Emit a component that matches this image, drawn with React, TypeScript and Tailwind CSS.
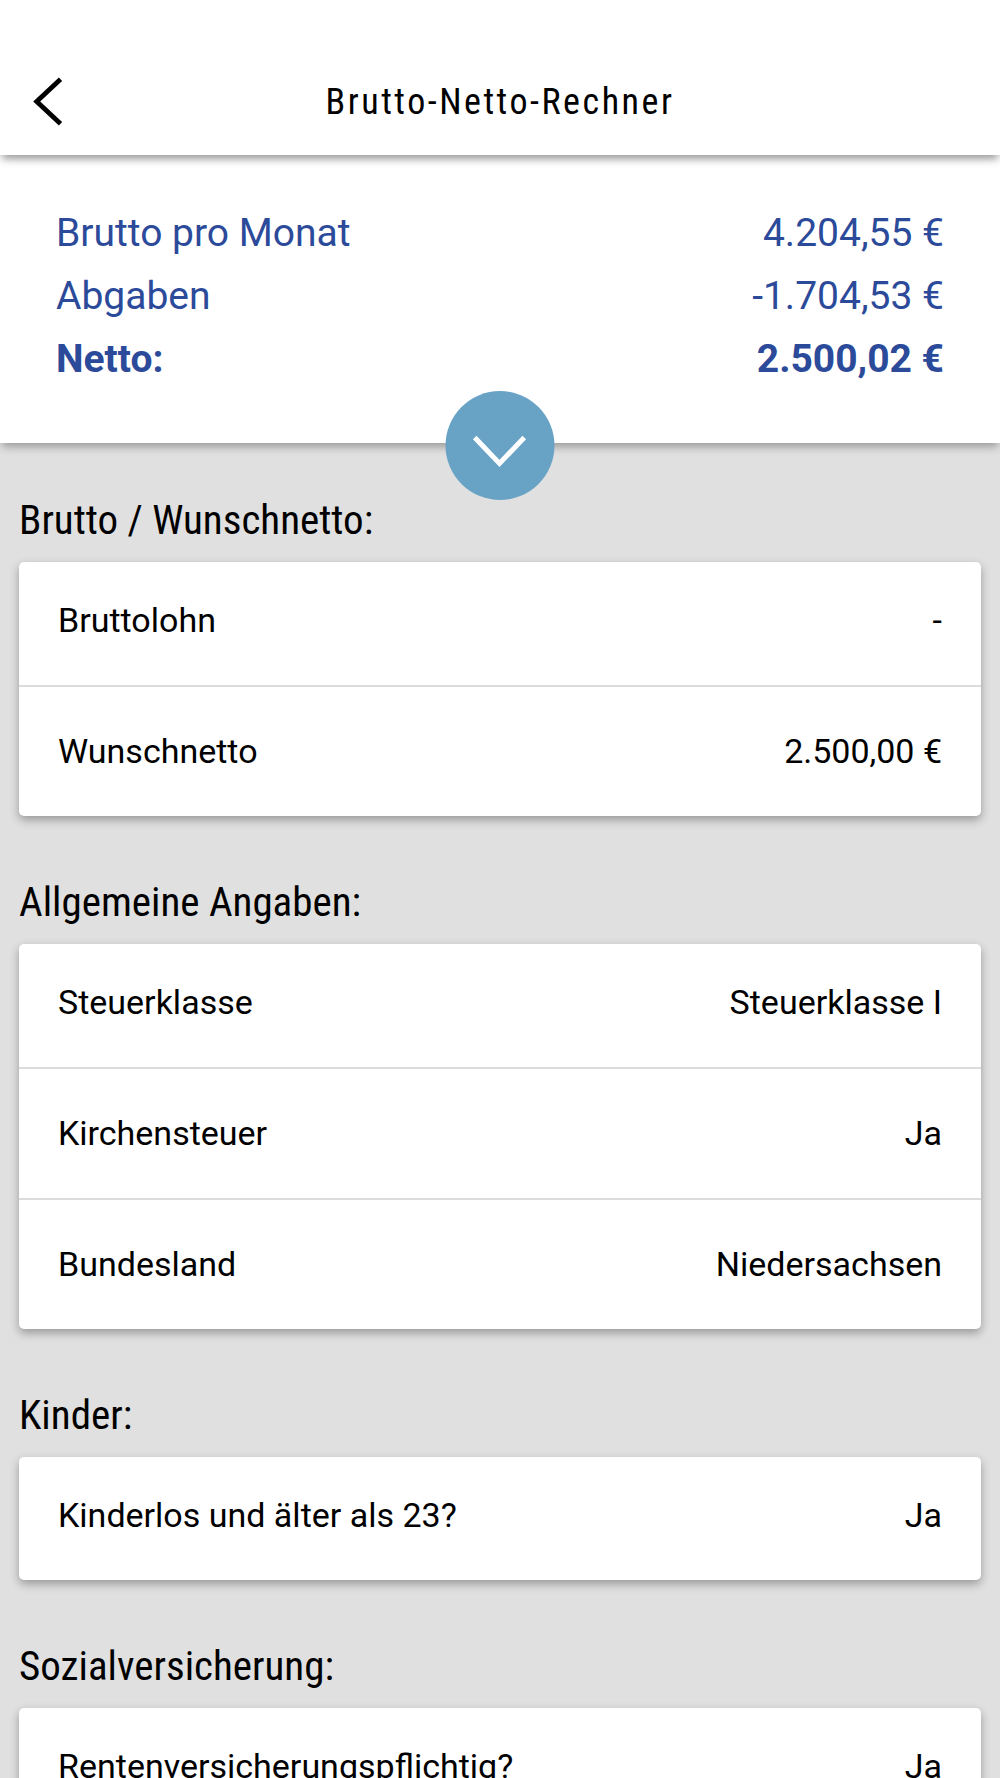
import { ChangeEvent, useState } from "react";

type Field = {
  id: string;
  label: string;
  value: string;
  options?: string[];
};

type Section = {
  title: string;
  fields: Field[];
};

const yesNo = ["Ja", "Nein"];

const results = [
  { label: "Brutto pro Monat", value: "4.204,55 €", total: false },
  { label: "Abgaben", value: "-1.704,53 €", total: false },
  { label: "Netto:", value: "2.500,02 €", total: true },
];

const sections: Section[] = [
  {
    title: "Brutto / Wunschnetto:",
    fields: [
      { id: "bruttolohn", label: "Bruttolohn", value: "-" },
      { id: "wunschnetto", label: "Wunschnetto", value: "2.500,00 €" },
    ],
  },
  {
    title: "Allgemeine Angaben:",
    fields: [
      { id: "steuerklasse", label: "Steuerklasse", value: "Steuerklasse I", options: ["Steuerklasse I", "Steuerklasse II", "Steuerklasse III"] },
      { id: "kirchensteuer", label: "Kirchensteuer", value: "Ja", options: yesNo },
      { id: "bundesland", label: "Bundesland", value: "Niedersachsen", options: ["Niedersachsen", "Bayern", "Berlin"] },
    ],
  },
  {
    title: "Kinder:",
    fields: [{ id: "kinderlos", label: "Kinderlos und älter als 23?", value: "Ja", options: yesNo }],
  },
  {
    title: "Sozialversicherung:",
    fields: [{ id: "rente", label: "Rentenversicherungspflichtig?", value: "Ja", options: yesNo }],
  },
];

function FieldRow({ field }: { field: Field }) {
  const [value, setValue] = useState(field.value);
  const onChange = (e: ChangeEvent<HTMLInputElement | HTMLSelectElement>) => setValue(e.target.value);

  return (
    <div className="flex items-center justify-between gap-4 px-[39px] pt-11 pb-[45px] first:pt-[38px]">
      <label htmlFor={field.id} className="whitespace-nowrap">
        {field.label}
      </label>
      {field.options ? (
        <select
          id={field.id}
          value={value}
          onChange={onChange}
          className="h-10 min-w-0 flex-1 appearance-none bg-transparent text-right [text-align-last:right] outline-none"
        >
          {field.options.map((o) => (
            <option key={o}>{o}</option>
          ))}
        </select>
      ) : (
        <input
          id={field.id}
          value={value}
          onChange={onChange}
          className="h-10 min-w-0 flex-1 bg-transparent text-right outline-none"
        />
      )}
    </div>
  );
}

export default function App() {
  return (
    <div className="h-screen overflow-hidden bg-[#e0e0e0] font-['Roboto',sans-serif] text-black">
      <header className="relative z-20 grid grid-cols-[1fr_auto_1fr] items-center bg-white px-8 pt-12 shadow-[0_6px_8px_-2px_rgba(0,0,0,0.4)]">
        <button type="button" aria-label="Zurück" className="flex h-[107px] w-10 items-center">
          <svg viewBox="0 0 32 50" className="h-[50px] w-8" fill="none" stroke="currentColor" strokeWidth="4.8">
            <path d="M28.5 2.2 4.7 24.4l23.8 22.3" />
          </svg>
        </button>
        <h1 className="font-['Roboto_Condensed','Roboto',sans-serif] text-4xl tracking-[0.07em]">Brutto-Netto-Rechner</h1>
      </header>

      <section className="relative z-10 bg-white px-14 pt-[47px] pb-[52px] text-[39px] leading-[63px] text-[#2c4a9a] shadow-[0_6px_8px_-2px_rgba(0,0,0,0.3)]">
        <dl>
          {results.map((r) => (
            <div key={r.label} className={r.total ? "flex justify-between font-bold" : "flex justify-between"}>
              <dt>{r.label}</dt>
              <dd>{r.value}</dd>
            </div>
          ))}
        </dl>
        <button
          type="button"
          aria-label="Details anzeigen"
          className="absolute -bottom-[57px] left-1/2 size-[109px] -translate-x-1/2 rounded-full bg-[#68a3c6] text-white"
        >
          <svg viewBox="0 0 109 109" className="size-full" fill="none" stroke="currentColor" strokeWidth="5">
            <path d="M29.2 46.6 54 72.4l24.8-25.8" />
          </svg>
        </button>
      </section>

      <main className="px-[19px] pt-[52px]">
        {sections.map((s) => (
          <section key={s.title} className="mb-[61px]">
            <h2 className="mb-[17px] font-['Roboto_Condensed','Roboto',sans-serif] text-[41px] leading-[50px]">{s.title}</h2>
            <div className="divide-y-2 divide-[#dcdcdc] rounded-[5px] bg-white text-[34px] leading-10 shadow-[0_4px_10px_rgba(0,0,0,0.32)]">
              {s.fields.map((f) => (
                <FieldRow key={f.id} field={f} />
              ))}
            </div>
          </section>
        ))}
      </main>
    </div>
  );
}
